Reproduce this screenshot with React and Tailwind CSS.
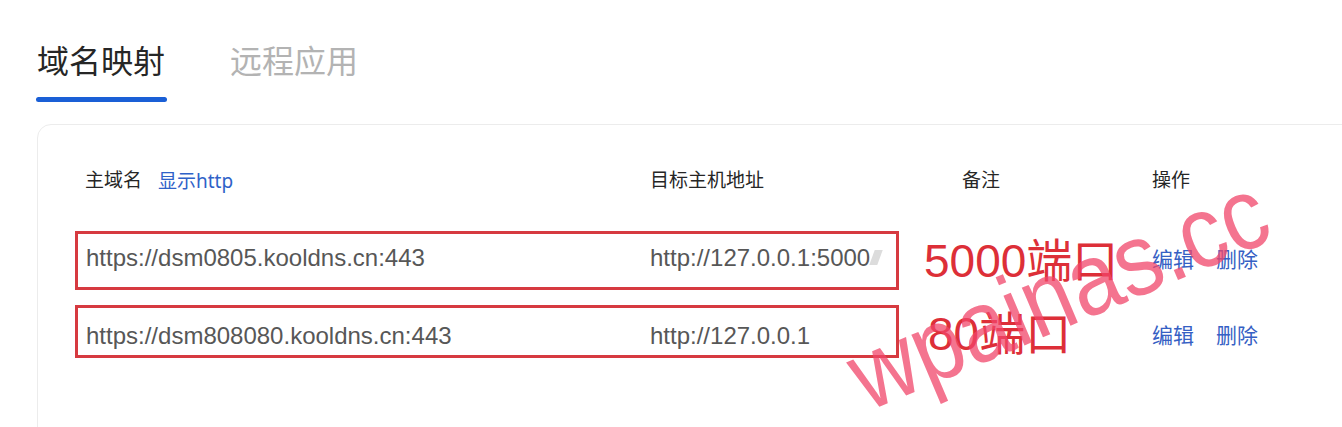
export default function App() {
  const rows = [
    { host: 'https://dsm0805.kooldns.cn:443', target: 'http://127.0.0.1:5000', note: '5000端口', boxH: 'h-[59px] pb-[6px]', noteP: 'pl-[25px]', cursor: true },
    { host: 'https://dsm808080.kooldns.cn:443', target: 'http://127.0.0.1', note: '80端口', boxH: 'h-[53px] pt-[8px]', noteP: 'pl-[29px] pt-[4px]', cursor: false },
  ];

  return (
    <div className="relative w-[1342px] h-[427px] overflow-hidden bg-white font-['Liberation_Sans','Noto_Sans_CJK_SC',sans-serif]">
      {/* tabs */}
      <div className="flex gap-[63px] pl-[36px] pt-[40px]">
        <div className="flex flex-col w-[131px]">
          <span className="text-[32px] leading-[44px] text-[#262626] pl-[1px]">域名映射</span>
          <div className="mt-[13px] h-[5px] rounded-full bg-[#1a5fd6]" />
        </div>
        <span className="text-[32px] leading-[44px] text-[#b3b3b3]">远程应用</span>
      </div>

      {/* card */}
      <div className="mt-[22px] ml-[37px] w-[1330px] h-[320px] border border-[#ececec] rounded-tl-[14px]">
        <div className="flex pt-[44px] pl-[47px] text-[19px] leading-[24px] text-[#262626]">
          <div className="w-[565px] flex gap-[16px]">
            <span>主域名</span>
            <span className="text-[#2f62c8] font-['Noto_Sans','Noto_Sans_CJK_SC',sans-serif]">显示http</span>
          </div>
          <div className="w-[312px]">目标主机地址</div>
          <div className="w-[190px]">备注</div>
          <div>操作</div>
        </div>

        <div className="mt-[38px] flex flex-col gap-[15px]">
          {rows.map((r, i) => (
            <div key={i} className="flex items-center">
              <div className={`ml-[37px] w-[824px] flex items-center border-[3px] border-[#d63a40] text-[24px] text-[#575757] ${r.boxH}`}>
                <span className="w-[572px] pl-[8px]">{r.host}</span>
                <span className="flex items-center">
                  {r.target}
                  {r.cursor && <span className="ml-[2px] inline-block w-[8px] h-[15px] bg-[#dcdcdc] -skew-x-[20deg]" />}
                </span>
              </div>
              <div className={`w-[253px] text-[46px] leading-none text-[#dd2f38] whitespace-nowrap ${r.noteP}`}>{r.note}</div>
              <div className={`flex gap-[22px] text-[21px] text-[#3560c4] ${i === 1 ? 'pt-[8px]' : 'pb-[2px]'}`}>
                <span>编辑</span>
                <span>删除</span>
              </div>
            </div>
          ))}
        </div>
      </div>

      {/* watermark */}
      <span className="pointer-events-none absolute left-[1058px] top-[293px] -translate-x-1/2 -translate-y-1/2 rotate-[-23deg] scale-x-[0.88] whitespace-nowrap text-[102px] leading-none text-[#f0456a]/75">
        wpainas.cc
      </span>
    </div>
  );
}
